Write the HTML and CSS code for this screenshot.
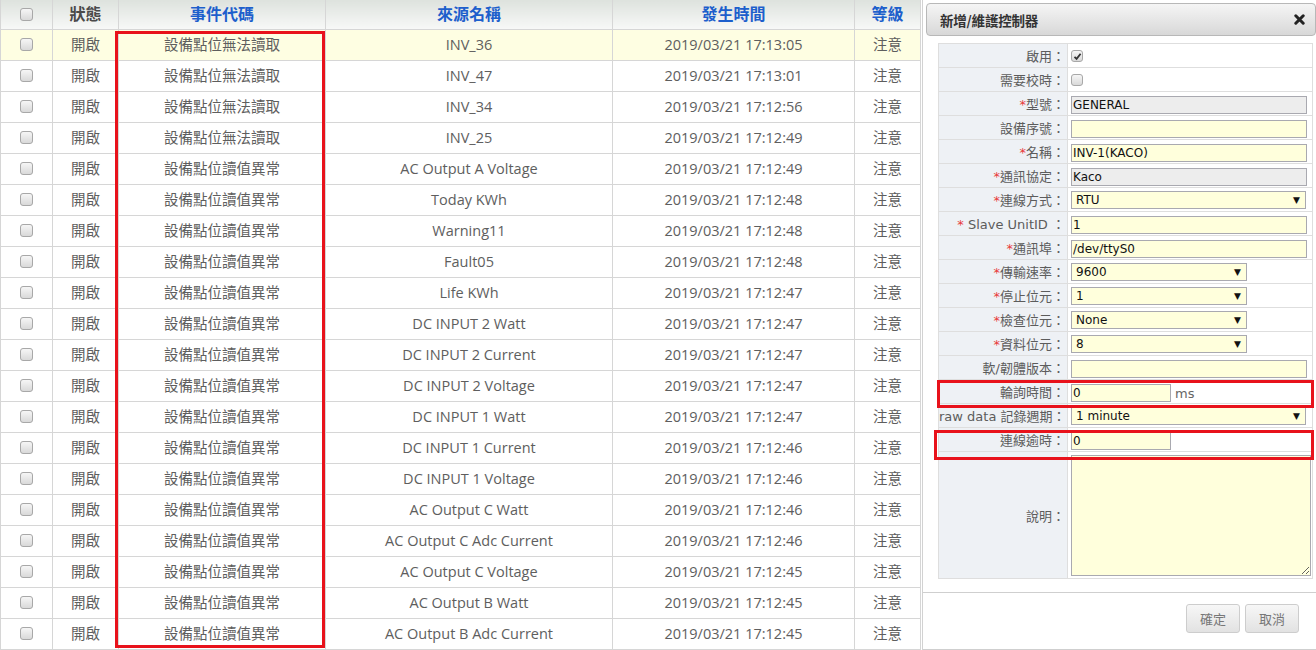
FILE: index.html
```html
<!DOCTYPE html>
<html lang="zh-Hant">
<head>
<meta charset="utf-8">
<title>事件列表</title>
<link rel="stylesheet" href="styles.css">
</head>
<body>
<div class="page">
  <div class="grid-wrap">
    <table class="grid">
      <colgroup>
        <col class="c-cb"><col class="c-state"><col class="c-code"><col class="c-src"><col class="c-time"><col class="c-level">
      </colgroup>
      <thead>
        <tr><th><span class="cb"></span></th><th class="plain">狀態</th><th>事件代碼</th><th>來源名稱</th><th>發生時間</th><th>等級</th></tr>
      </thead>
      <tbody>
        <tr class="hl"><td><span class="cb"></span></td><td>開啟</td><td>設備點位無法讀取</td><td>INV_36</td><td>2019/03/21 17:13:05</td><td>注意</td></tr>
        <tr><td><span class="cb"></span></td><td>開啟</td><td>設備點位無法讀取</td><td>INV_47</td><td>2019/03/21 17:13:01</td><td>注意</td></tr>
        <tr><td><span class="cb"></span></td><td>開啟</td><td>設備點位無法讀取</td><td>INV_34</td><td>2019/03/21 17:12:56</td><td>注意</td></tr>
        <tr><td><span class="cb"></span></td><td>開啟</td><td>設備點位無法讀取</td><td>INV_25</td><td>2019/03/21 17:12:49</td><td>注意</td></tr>
        <tr><td><span class="cb"></span></td><td>開啟</td><td>設備點位讀值異常</td><td>AC Output A Voltage</td><td>2019/03/21 17:12:49</td><td>注意</td></tr>
        <tr><td><span class="cb"></span></td><td>開啟</td><td>設備點位讀值異常</td><td>Today KWh</td><td>2019/03/21 17:12:48</td><td>注意</td></tr>
        <tr><td><span class="cb"></span></td><td>開啟</td><td>設備點位讀值異常</td><td>Warning11</td><td>2019/03/21 17:12:48</td><td>注意</td></tr>
        <tr><td><span class="cb"></span></td><td>開啟</td><td>設備點位讀值異常</td><td>Fault05</td><td>2019/03/21 17:12:48</td><td>注意</td></tr>
        <tr><td><span class="cb"></span></td><td>開啟</td><td>設備點位讀值異常</td><td>Life KWh</td><td>2019/03/21 17:12:47</td><td>注意</td></tr>
        <tr><td><span class="cb"></span></td><td>開啟</td><td>設備點位讀值異常</td><td>DC INPUT 2 Watt</td><td>2019/03/21 17:12:47</td><td>注意</td></tr>
        <tr><td><span class="cb"></span></td><td>開啟</td><td>設備點位讀值異常</td><td>DC INPUT 2 Current</td><td>2019/03/21 17:12:47</td><td>注意</td></tr>
        <tr><td><span class="cb"></span></td><td>開啟</td><td>設備點位讀值異常</td><td>DC INPUT 2 Voltage</td><td>2019/03/21 17:12:47</td><td>注意</td></tr>
        <tr><td><span class="cb"></span></td><td>開啟</td><td>設備點位讀值異常</td><td>DC INPUT 1 Watt</td><td>2019/03/21 17:12:47</td><td>注意</td></tr>
        <tr><td><span class="cb"></span></td><td>開啟</td><td>設備點位讀值異常</td><td>DC INPUT 1 Current</td><td>2019/03/21 17:12:46</td><td>注意</td></tr>
        <tr><td><span class="cb"></span></td><td>開啟</td><td>設備點位讀值異常</td><td>DC INPUT 1 Voltage</td><td>2019/03/21 17:12:46</td><td>注意</td></tr>
        <tr><td><span class="cb"></span></td><td>開啟</td><td>設備點位讀值異常</td><td>AC Output C Watt</td><td>2019/03/21 17:12:46</td><td>注意</td></tr>
        <tr><td><span class="cb"></span></td><td>開啟</td><td>設備點位讀值異常</td><td>AC Output C Adc Current</td><td>2019/03/21 17:12:46</td><td>注意</td></tr>
        <tr><td><span class="cb"></span></td><td>開啟</td><td>設備點位讀值異常</td><td>AC Output C Voltage</td><td>2019/03/21 17:12:45</td><td>注意</td></tr>
        <tr><td><span class="cb"></span></td><td>開啟</td><td>設備點位讀值異常</td><td>AC Output B Watt</td><td>2019/03/21 17:12:45</td><td>注意</td></tr>
        <tr><td><span class="cb"></span></td><td>開啟</td><td>設備點位讀值異常</td><td>AC Output B Adc Current</td><td>2019/03/21 17:12:45</td><td>注意</td></tr>
      </tbody>
    </table>
  </div>

  <div class="dialog">
    <div class="dlg-head">
      <span class="dlg-title">新增/維護控制器</span>
      <span class="dlg-close"><svg width="11" height="11" viewBox="0 0 11 11"><path d="M1.8 1.8 L9.2 9.2 M9.2 1.8 L1.8 9.2" stroke="#222" stroke-width="3" stroke-linecap="round"/></svg></span>
    </div>
    <div class="dlg-body">
      <table class="form">
        <colgroup><col class="f-label"><col class="f-value"></colgroup>
        <tr><td class="lbl">啟用：</td><td class="val"><span class="cb sm checked"><svg width="9" height="9" viewBox="0 0 9 9"><path d="M1.5 4.8 L3.6 6.9 L7.6 1.8" fill="none" stroke="#333" stroke-width="1.8"/></svg></span></td></tr>
        <tr><td class="lbl">需要校時：</td><td class="val"><span class="cb sm"></span></td></tr>
        <tr><td class="lbl"><i>*</i>型號：</td><td class="val"><input class="txt ro" value="GENERAL" readonly></td></tr>
        <tr><td class="lbl">設備序號：</td><td class="val"><input class="txt" value=""></td></tr>
        <tr><td class="lbl"><i>*</i>名稱：</td><td class="val"><input class="txt" value="INV-1(KACO)"></td></tr>
        <tr><td class="lbl"><i>*</i>通訊協定：</td><td class="val"><input class="txt ro" value="Kaco" readonly></td></tr>
        <tr><td class="lbl"><i>*</i>連線方式：</td><td class="val"><div class="dd wide"><span>RTU</span><b>▼</b></div></td></tr>
        <tr><td class="lbl"><i>*</i> Slave UnitID ：</td><td class="val"><input class="txt" value="1"></td></tr>
        <tr><td class="lbl"><i>*</i>通訊埠：</td><td class="val"><input class="txt" value="/dev/ttyS0"></td></tr>
        <tr><td class="lbl"><i>*</i>傳輸速率：</td><td class="val"><div class="dd"><span>9600</span><b>▼</b></div></td></tr>
        <tr><td class="lbl"><i>*</i>停止位元：</td><td class="val"><div class="dd"><span>1</span><b>▼</b></div></td></tr>
        <tr><td class="lbl"><i>*</i>檢查位元：</td><td class="val"><div class="dd"><span>None</span><b>▼</b></div></td></tr>
        <tr><td class="lbl"><i>*</i>資料位元：</td><td class="val"><div class="dd"><span>8</span><b>▼</b></div></td></tr>
        <tr><td class="lbl">軟/韌體版本：</td><td class="val"><input class="txt" value=""></td></tr>
        <tr><td class="lbl">輪詢時間：</td><td class="val"><input class="txt short" value="0"><span class="unit">ms</span></td></tr>
        <tr><td class="lbl">raw data 記錄週期：</td><td class="val"><div class="dd wide"><span>1 minute</span><b>▼</b></div></td></tr>
        <tr><td class="lbl">連線逾時：</td><td class="val"><input class="txt short" value="0"></td></tr>
        <tr class="tall"><td class="lbl">說明：</td><td class="val"><textarea class="memo"></textarea></td></tr>
      </table>
    </div>
    <div class="dlg-foot">
      <button class="btn">確定</button>
      <button class="btn">取消</button>
    </div>
  </div>
</div>

<div class="mark mark-col"></div>
<div class="mark mark-poll"></div>
<div class="mark mark-timeout"></div>
</body>
</html>
```

FILE: styles.css
```css
* { box-sizing: border-box; }
html, body { margin: 0; padding: 0; background: #fff; }
body {
  width: 1316px;
  height: 650px;
  overflow: hidden;
  position: relative;
  font-family: "Open Sans", "Noto Sans CJK TC", sans-serif;
}
.page { display: flex; align-items: flex-start; }

/* ---------- event grid ---------- */
.grid-wrap { width: 920px; flex: none; }
.grid { width: 920px; border-collapse: collapse; table-layout: fixed; }
.c-cb { width: 52px; }
.c-state { width: 66px; }
.c-code { width: 207px; }
.c-src { width: 287px; }
.c-time { width: 242px; }
.c-level { width: 66px; }
.grid th, .grid td {
  border: 1px solid #d6d6d6;
  text-align: center;
  padding: 0;
  white-space: nowrap;
  overflow: hidden;
  line-height: 20px;
}
.grid thead tr { height: 29px; }
.grid th {
  background: linear-gradient(#dde2dd, #f7f8f7);
  color: #1d5fcc;
  font-size: 16px;
  font-weight: bold;
  border-top: none;
}
.grid th.plain { color: #4a4a4a; }
.grid tbody tr { height: 31px; }
.grid td { font-size: 14.5px; color: #5e5e5e; }
.grid tr.hl td { background: #fefee2; }

.cb {
  display: inline-block;
  width: 13px;
  height: 13px;
  border: 1px solid #a8a8a8;
  border-radius: 3px;
  background: linear-gradient(#f6f6f6, #d9d9d9);
  vertical-align: middle;
  position: relative;
  top: -1px;
}
.cb.sm { width: 12px; height: 12px; }
.cb.checked { display: inline-flex; align-items: center; justify-content: center; }

/* ---------- dialog ---------- */
.dialog {
  width: 394px;
  margin-left: 2px;
  height: 650px;
  border-left: 1px solid #d2d2d2;
  padding: 3px 0 0 3px;
  display: flex;
  flex-direction: column;
}
.dlg-head {
  height: 33px;
  border: 1px solid #b8b8b8;
  border-radius: 4px;
  background: linear-gradient(#f5f5f5, #d8d8d8);
  display: flex;
  align-items: center;
  justify-content: space-between;
  padding: 0 10px 0 13px;
}
.dlg-title {
  font-family: "Noto Sans CJK TC", sans-serif;
  font-size: 13.5px;
  font-weight: bold;
  color: #333;
  letter-spacing: -0.2px;
}
.dlg-close { display: flex; }

.dlg-body { padding: 7px 3px 0 12px; }
.form {
  width: 375px;
  border-collapse: collapse;
  table-layout: fixed;
}
.f-label { width: 129px; }
.form td { border: 1px solid #dedede; padding: 0; }
.form tr { height: 24px; }
.form tr.tall { height: 127px; }
.form .lbl {
  background: #eef1f5;
  text-align: right;
  padding-right: 2px;
  font-family: "DejaVu Sans", "Noto Sans CJK TC", sans-serif;
  font-size: 13px;
  color: #5c5c5c;
  white-space: nowrap;
}
.form .lbl i { font-style: normal; color: #e83a3a; }
.form .val { padding: 0 3px; white-space: nowrap; }

.txt {
  width: 236px;
  height: 18px;
  border: 1px solid #a9a9b0;
  background: #ffffdc;
  font-family: "DejaVu Sans", sans-serif;
  font-size: 12px;
  color: #111;
  padding: 0 1px;
  vertical-align: middle;
  outline: none;
}
.txt.ro { background: #ededed; }
.txt.short { width: 100px; }
.unit {
  font-family: "DejaVu Sans", sans-serif;
  font-size: 13px;
  color: #666;
  margin-left: 4px;
  vertical-align: middle;
}
.dd {
  width: 176px;
  height: 18px;
  border: 1px solid #a9a9b0;
  background: #ffffdc;
  display: flex;
  align-items: center;
  justify-content: space-between;
  padding: 0 5px 0 4px;
  font-family: "DejaVu Sans", sans-serif;
  font-size: 12px;
  color: #111;
}
.dd.wide { width: 235px; }
.dd b { font-size: 9px; color: #111; font-weight: normal; }
.memo {
  display: block;
  width: 240px;
  height: 121px;
  margin: 0;
  border: 1px solid #a9a9b0;
  background: #ffffdc;
  resize: both;
}

.dlg-foot {
  margin-top: 13px;
  height: 58px;
  border-top: 1px solid #cfcfcf;
  border-bottom: 1px solid #cfcfcf;
  margin-left: -3px;
  display: flex;
  justify-content: flex-end;
  align-items: flex-start;
  gap: 5px;
  padding: 11px 17px 0 0;
}
.btn {
  width: 54px;
  height: 29px;
  border: 1px solid #cdcdcd;
  border-radius: 3px;
  background: linear-gradient(#f7f7f7, #e2e2e2);
  font-family: "Noto Sans CJK TC", sans-serif;
  font-size: 13px;
  color: #777;
  padding: 0;
}

/* ---------- annotation boxes ---------- */
.mark { position: absolute; border: 3px solid #e8121b; }
.mark-col { left: 115px; top: 31px; width: 210px; height: 617px; }
.mark-poll { left: 937px; top: 380px; width: 377px; height: 28px; }
.mark-timeout { left: 934px; top: 430px; width: 380px; height: 30px; }
```
